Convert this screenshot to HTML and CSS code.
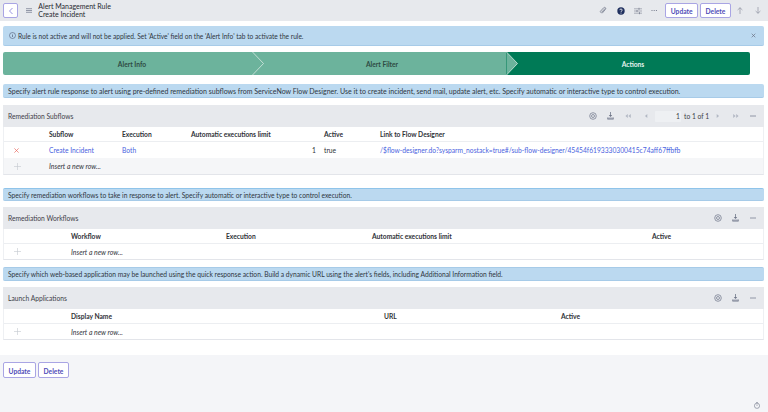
FILE: index.html
```html
<!DOCTYPE html>
<html lang="en">
<head>
<meta charset="utf-8">
<title>Alert Management Rule</title>
<link rel="stylesheet" href="styles.css">
</head>
<body>
<header class="topbar">
  <button class="back"><svg width="6" height="8" viewBox="0 0 6 8"><path d="M4.5 1 1.5 4l3 3" fill="none" stroke="#7d78d8" stroke-width=".8"/></svg></button>
  <svg class="menu" width="6" height="5" viewBox="0 0 6 5"><path d="M0 .7h6M0 2.5h6M0 4.3h6" stroke="#7b8194" stroke-width=".8"/></svg>
  <div class="title"><div>Alert Management Rule</div><div>Create Incident</div></div>
  <div class="actions">
    <svg class="i1" width="8" height="9" viewBox="0 0 8 9"><path d="M6.6 2.2 3 6.1c-.7.8-1.9-.2-1.2-1l3.1-3.4c1.2-1.2 2.9.3 1.8 1.6L3.4 7.2" transform="translate(-.3 .1)" fill="none" stroke="#7f8595" stroke-width=".9"/></svg>
    <svg class="i2" width="8" height="8" viewBox="0 0 8 8"><circle cx="4" cy="4" r="3.7" fill="#20305f"/><path d="M2.8 3.1c0-1.5 2.4-1.5 2.4 0 0 .9-1.2.9-1.2 1.8" fill="none" stroke="#fff" stroke-width=".8"/><circle cx="4" cy="6" r=".5" fill="#fff"/></svg>
    <svg class="i3" width="8" height="8" viewBox="0 0 8 8"><path d="M0 1.8h8M0 4h8M0 6.2h8" stroke="#7f8595" stroke-width=".6"/><path d="M5 .8v2M3 3v2M5.5 5.2v2" stroke="#7f8595" stroke-width=".9"/></svg>
    <svg class="i4" width="7" height="3" viewBox="0 0 7 3"><g fill="#6a7083"><circle cx="1" cy="1.5" r=".6"/><circle cx="3.2" cy="1.5" r=".6"/><circle cx="5.4" cy="1.5" r=".6"/></g></svg>
    <button class="btn btn-top">Update</button>
    <button class="btn btn-top btn-del">Delete</button>
    <svg class="i5" width="6" height="7" viewBox="0 0 6 7"><path d="M3 7V.7M.6 3 3 .7 5.4 3" fill="none" stroke="#7f8595" stroke-width=".6"/></svg>
    <svg class="i6" width="6" height="7" viewBox="0 0 6 7"><path d="M3 0v6.3M.6 4 3 6.3 5.4 4" fill="none" stroke="#7f8595" stroke-width=".6"/></svg>
  </div>
</header>

<main class="form">
  <div class="alert">
    <svg width="7" height="7" viewBox="0 0 7 7"><circle cx="3.5" cy="3.5" r="3" fill="none" stroke="#3c4560" stroke-width=".5"/><path d="M3.5 3v2M3.5 1.9v.6" stroke="#3c4560" stroke-width=".6"/></svg>
    <span>Rule is not active and will not be applied. Set 'Active' field on the 'Alert Info' tab to activate the rule.</span>
    <svg class="close" width="5" height="5" viewBox="0 0 5 5"><path d="M.7.7l3.6 3.6M4.3.7.7 4.3" stroke="#6a7083" stroke-width=".7"/></svg>
  </div>

  <div class="steps">
    <div class="step step-a">Alert Info</div>
    <div class="step step-b">Alert Filter</div>
    <div class="step step-c">Actions</div>
    <svg class="chev chev-1" width="13" height="23" viewBox="0 0 13 23"><path d="M.5 0 11.5 11.5.5 23" fill="#6cb39c" stroke="#e6f1ed" stroke-width=".7"/></svg>
    <svg class="chev chev-2" width="13" height="23" viewBox="0 0 13 23"><path d="M.5 0 11.5 11.5.5 23Z" fill="#6cb39c"/><path d="M.5 0 11.5 11.5.5 23" fill="none" stroke="#e6f1ed" stroke-width=".7"/></svg>
  </div>

  <p class="note note-1">Specify alert rule response to alert using pre-defined remediation subflows from ServiceNow Flow Designer. Use it to create incident, send mail, update alert, etc. Specify automatic or interactive type to control execution.</p>

  <section class="list list-1">
    <div class="list-head">
      <span class="list-title">Remediation Subflows</span>
      <div class="tools">
        <svg class="gear" width="8" height="8" viewBox="0 0 8 8"><circle cx="4" cy="4" r="3.3" fill="none" stroke="#7b8194" stroke-width=".8"/><circle cx="4" cy="4" r="1.5" fill="none" stroke="#7b8194" stroke-width=".8"/></svg>
        <svg class="dl" width="7" height="8" viewBox="0 0 7 8"><path d="M3.5 0v3.5" stroke="#6f7688" stroke-width=".8"/><path d="M3.5 5 1.8 3h3.4Z" fill="#6f7688"/><path d="M.6 5.5v1.7h5.8V5.5" fill="#a3a8b6" stroke="#6f7688" stroke-width=".6"/></svg>
        <svg class="pg p1" width="6" height="4" viewBox="0 0 6 4"><path d="M2.8 0v4L.4 2ZM5.8 0v4L3.4 2Z" fill="#b3b8c4"/></svg>
        <svg class="pg p2" width="6" height="4" viewBox="0 0 6 4"><path d="M4.3 0v4L1.9 2Z" fill="#b3b8c4"/></svg>
        <span class="pageinput">1</span>
        <span class="pgtext">to 1 of 1</span>
        <svg class="pg p3" width="6" height="4" viewBox="0 0 6 4"><path d="M1.7 0v4L4.1 2Z" fill="#b3b8c4"/></svg>
        <svg class="pg p4" width="6" height="4" viewBox="0 0 6 4"><path d="M.2 0v4L2.6 2ZM3.2 0v4L5.6 2Z" fill="#b3b8c4"/></svg>
        <svg class="dash" width="6" height="2" viewBox="0 0 6 2"><path d="M0 1h6" stroke="#7b8194" stroke-width=".8"/></svg>
      </div>
    </div>
    <div class="row cols-1 row-h">
      <span></span><span>Subflow</span><span>Execution</span><span>Automatic executions limit</span><span>Active</span><span>Link to Flow Designer</span>
    </div>
    <div class="row cols-1 row-d">
      <svg width="5" height="5" viewBox="0 0 5 5"><path d="M.4.4l4.2 4.2M4.6.4.4 4.6" stroke="#e8685f" stroke-width=".7"/></svg>
      <a>Create Incident</a><a>Both</a><span class="num">1</span><span>true</span><a>/$flow-designer.do?sysparm_nostack=true#/sub-flow-designer/45454f6193330300415c74aff67ffbfb</a>
    </div>
    <div class="row cols-1 row-i row-shade">
      <svg width="7" height="7" viewBox="0 0 7 7"><path d="M3.5 0v7M0 3.5h7" stroke="#c3c7cf" stroke-width=".6"/></svg>
      <em>Insert a new row...</em>
    </div>
  </section>

  <p class="note note-2">Specify remediation workflows to take in response to alert. Specify automatic or interactive type to control execution.</p>

  <section class="list list-2">
    <div class="list-head">
      <span class="list-title">Remediation Workflows</span>
      <div class="tools">
        <svg class="gear" width="8" height="8" viewBox="0 0 8 8"><circle cx="4" cy="4" r="3.3" fill="none" stroke="#7b8194" stroke-width=".8"/><circle cx="4" cy="4" r="1.5" fill="none" stroke="#7b8194" stroke-width=".8"/></svg>
        <svg class="dl" width="7" height="8" viewBox="0 0 7 8"><path d="M3.5 0v3.5" stroke="#6f7688" stroke-width=".8"/><path d="M3.5 5 1.8 3h3.4Z" fill="#6f7688"/><path d="M.6 5.5v1.7h5.8V5.5" fill="#a3a8b6" stroke="#6f7688" stroke-width=".6"/></svg>
        <svg class="dash" width="6" height="2" viewBox="0 0 6 2"><path d="M0 1h6" stroke="#7b8194" stroke-width=".8"/></svg>
      </div>
    </div>
    <div class="row cols-2 row-h">
      <span></span><span>Workflow</span><span>Execution</span><span>Automatic executions limit</span><span>Active</span>
    </div>
    <div class="row cols-2 row-i">
      <svg width="7" height="7" viewBox="0 0 7 7"><path d="M3.5 0v7M0 3.5h7" stroke="#c3c7cf" stroke-width=".6"/></svg>
      <em>Insert a new row...</em>
    </div>
  </section>

  <p class="note note-3">Specify which web-based application may be launched using the quick response action. Build a dynamic URL using the alert's fields, including Additional Information field.</p>

  <section class="list list-3">
    <div class="list-head">
      <span class="list-title">Launch Applications</span>
      <div class="tools">
        <svg class="gear" width="8" height="8" viewBox="0 0 8 8"><circle cx="4" cy="4" r="3.3" fill="none" stroke="#7b8194" stroke-width=".8"/><circle cx="4" cy="4" r="1.5" fill="none" stroke="#7b8194" stroke-width=".8"/></svg>
        <svg class="dl" width="7" height="8" viewBox="0 0 7 8"><path d="M3.5 0v3.5" stroke="#6f7688" stroke-width=".8"/><path d="M3.5 5 1.8 3h3.4Z" fill="#6f7688"/><path d="M.6 5.5v1.7h5.8V5.5" fill="#a3a8b6" stroke="#6f7688" stroke-width=".6"/></svg>
        <svg class="dash" width="6" height="2" viewBox="0 0 6 2"><path d="M0 1h6" stroke="#7b8194" stroke-width=".8"/></svg>
      </div>
    </div>
    <div class="row cols-3 row-h">
      <span></span><span>Display Name</span><span>URL</span><span>Active</span>
    </div>
    <div class="row cols-3 row-i">
      <svg width="7" height="7" viewBox="0 0 7 7"><path d="M3.5 0v7M0 3.5h7" stroke="#c3c7cf" stroke-width=".6"/></svg>
      <em>Insert a new row...</em>
    </div>
  </section>
</main>

<footer class="foot">
  <div class="foot-btns">
    <button class="btn">Update</button>
    <button class="btn btn-del">Delete</button>
  </div>
  <svg class="clock" width="6" height="7" viewBox="0 0 6 7"><circle cx="3" cy="3.8" r="2.6" fill="none" stroke="#6f7688" stroke-width=".6"/><path d="M3 2.4v1.5M2 .4h2" stroke="#6f7688" stroke-width=".6"/></svg>
</footer>
</body>
</html>
```
FILE: styles.css
```css
* { box-sizing: border-box; }
html, body { margin: 0; height: 412px; overflow: hidden; }
body {
  display: flex;
  flex-direction: column;
  background: #fff;
  color: #303238;
  font-family: Lato, "Liberation Sans", sans-serif;
  font-size: 6.7px;
  line-height: 1;
}
svg { display: block; flex: none; }
button { font-family: inherit; padding: 0; cursor: pointer; }

.topbar {
  height: 21px;
  background: #e7e9ed;
  display: flex;
  align-items: center;
  padding: 0 0 0 3px;
  flex: none;
}
.back {
  width: 15px;
  height: 15px;
  background: #fff;
  border: 1px solid #a9a5e4;
  border-radius: 2px;
  display: flex;
  align-items: center;
  justify-content: center;
}
.menu { margin-left: 8px; }
.title { margin-left: 6.3px; font-size: 7px; line-height: 7.5px; color: #26282f; }
.actions { margin-left: auto; display: flex; align-items: center; }
.btn {
  height: 15px;
  width: 33px;
  background: #fff;
  border: 1px solid #a9a5e4;
  border-radius: 2px;
  color: #4f4cb8;
  font-size: 6.7px;
  font-weight: 700;
  padding-top: 1px;
}
.btn-del { width: 31px; margin-left: 2px; }
.btn-top { width: 32.5px; }
.btn-top.btn-del { width: 30.5px; margin-left: 2.3px; }
.i2 { margin-left: 9.7px; }
.i3 { margin-left: 9.3px; }
.i4 { margin-left: 9.5px; margin-right: 7px; }
.i5 { margin-left: 6.6px; }
.i6 { margin-left: 11.4px; margin-right: 7.3px; }

.form { padding: 5px 4px 0 3px; flex: 1; }
.alert {
  height: 20px;
  background: #bbd9f0;
  border-bottom: 1px solid #a7cbe8;
  border-radius: 2px;
  display: flex;
  align-items: center;
  padding: 0 6px;
  gap: 2px;
  color: #2f3640;
  font-size: 6.6px;
}
.alert span { padding-top: 1px; }
.close { margin-left: auto; margin-right: 2px; }

.steps {
  position: relative;
  display: flex;
  margin-top: 6px;
  height: 23px;
  width: 747px;
  font-weight: 700;
}
.step { display: flex; align-items: center; justify-content: center; color: #2e4a42; padding-top: 1px; }
.step-a { width: 249px; background: #6cb39c; border-radius: 2px 0 0 2px; padding-left: 9px; }
.step-b { width: 254px; background: #6cb39c; padding-left: 6px; }
.step-c { flex: 1; background: #007a56; color: #e6f3ee; border-radius: 0 2px 2px 0; padding-left: 10px; }
.chev { position: absolute; top: 0; }
.chev-1 { left: 249px; }
.chev-2 { left: 503px; }

.note {
  margin: 0;
  background: #bbd9f0;
  border-bottom: 1px solid #a7cbe8;
  border-radius: 2px;
  display: flex;
  align-items: center;
  padding: 1px 5px 0;
  color: #2f3640;
}
.note-1 { margin-top: 9px; height: 14px; font-size: 7px; }
.note-2 { margin-top: 13px; height: 13px; border-top: 1px solid #8fc4ea; }
.note-3 { margin-top: 7px; height: 14px; border-top: 1px solid #a7cbe8; }

.list { border-bottom: 1px solid #e3e5ea; border-left: 1px solid #eef0f3; border-right: 1px solid #eef0f3; }
.list-1 { margin-top: 7px; }
.list-2 { margin-top: 6px; }
.list-3 { margin-top: 6px; }
.list-head {
  height: 22px;
  background: #e7e9ed;
  display: flex;
  align-items: center;
  margin: 0 -1px;
  padding-left: 5px;
  color: #3e4048;
}
.tools { margin-left: auto; display: flex; align-items: center; padding-right: 8px; }
.dl { margin-left: 10px; }
.dash { margin-left: 10.8px; }
.p1 { margin-left: 11px; }
.p2 { margin-left: 11.4px; }
.pageinput {
  width: 26px; height: 11px; margin-left: 6.3px;
  background: #eef0f3; border-radius: 1px;
  display: flex; align-items: center; justify-content: flex-end;
  padding: 1px 1px 0 0;
}
.pgtext { margin-left: 3px; padding-top: 1px; }
.p3 { margin-left: 6px; }
.p4 { margin-left: 11.7px; }
.list-1 .dash { margin-left: 11.3px; }

.row { display: grid; align-items: center; background: #fff; }
.row > span, .row > a, .row > em { padding-top: 1px; }
.row-h { height: 15px; font-weight: 700; border-bottom: 1px solid #eceef1; }
.row-d { height: 16px; }
.row-i { height: 15px; }
.row-shade { background: #f5f6f8; height: 16px; }
.row > svg { margin-left: 10px; }
.cols-1 { grid-template-columns: 45px 73px 69px 133px 56px 1fr; }
.cols-2 { grid-template-columns: 67px 155px 146px 280px 1fr; }
.cols-3 { grid-template-columns: 67px 313px 177px 1fr; }
.row-d a { color: #4a63e0; }
.row-d .num { text-align: right; padding-right: 8px; }
em { font-size: 6.9px; font-style: italic; color: #33353c; }

.foot {
  flex: none;
  height: 57px;
  background: #f4f5f8;
  position: relative;
  padding: 7px 3px 0;
}
.foot-btns { display: flex; }
.foot .btn { height: 16px; }
.clock { position: absolute; right: 8px; bottom: 3px; }
```
